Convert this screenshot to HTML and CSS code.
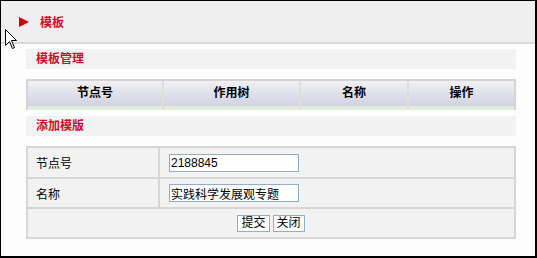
FILE: index.html
```html
<!DOCTYPE html>
<html lang="zh-CN">
<head>
    <meta charset="UTF-8">
    <title>模板</title>
    <link rel="stylesheet" href="styles.css">
</head>
<body>
    <div class="frame">
        <div class="title-bar">
            <span class="arrow"></span>
            <span class="title">模板</span>
        </div>

        <div class="content">
            <div class="section">模板管理</div>
            <div class="list">
                <div class="list-head">
                    <div class="cell">节点号</div>
                    <div class="cell">作用树</div>
                    <div class="cell">名称</div>
                    <div class="cell">操作</div>
                </div>
                <div class="list-foot">
                    <div class="cell"></div>
                    <div class="cell"></div>
                    <div class="cell"></div>
                    <div class="cell"></div>
                </div>
            </div>

            <div class="section">添加模版</div>
            <div class="form">
                <div class="label">节点号</div>
                <div class="field"><input type="text" class="text-input" value="2188845"></div>
                <div class="label">名称</div>
                <div class="field"><input type="text" class="text-input" value="实践科学发展观专题"></div>
                <div class="actions">
                    <button class="btn">提交</button>
                    <button class="btn">关闭</button>
                </div>
            </div>
        </div>

        <svg class="cursor" width="13" height="22" viewBox="0 0 13 22">
            <path d="M0.5 0.5 L0.5 16.5 L4.5 12.5 L7.5 19.5 L9.5 18.5 L6.5 11.5 L11.5 11.5 Z" fill="#fff" stroke="#000" stroke-width="1"/>
        </svg>
    </div>
</body>
</html>
```

FILE: styles.css
```css
body {
    margin: 0;
    background-color: #fff;
    font-family: "Liberation Sans", "Noto Sans CJK SC", sans-serif;
    font-size: 12px;
}
.frame {
    position: relative;
    box-sizing: border-box;
    width: 537px;
    height: 258px;
    border-style: solid;
    border-color: #000;
    border-width: 1px 2px 2px 1px;
    background-color: #fdfdfd;
}
.title-bar {
    display: flex;
    align-items: center;
    height: 41px;
    background-color: #efefef;
    border-bottom: 2px solid #d8d8d8;
}
.arrow {
    width: 0;
    height: 0;
    margin-left: 18px;
    margin-right: 11px;
    border-left: 10px solid #d40000;
    border-top: 5px solid transparent;
    border-bottom: 5px solid transparent;
}
.title {
    color: #c8102e;
    font-weight: bold;
}
.content {
    padding: 5px 19px 0 25px;
}
.section {
    height: 20px;
    line-height: 20px;
    padding-left: 10px;
    background-color: #f2f2f2;
    color: #c8102e;
    font-weight: bold;
}
.list {
    margin: 10px 0 6px;
    border: 2px solid #d4d4d4;
    border-bottom: 0;
}
.list-head,
.list-foot {
    display: grid;
    grid-template-columns: 134px 137px 108px 1fr;
}
.list-head .cell {
    height: 25px;
    line-height: 25px;
    text-align: center;
    font-weight: bold;
    color: #000;
    background: linear-gradient(#f0f0f4, #d2d2e2);
}
.list-foot .cell {
    height: 4px;
    background-color: #e0ecdc;
}
.cell + .cell {
    border-left: 2px solid #dde0d8;
}
.form {
    display: grid;
    grid-template-columns: 130px 1fr;
    grid-template-rows: 29px 28px 28px;
    gap: 2px;
    margin-top: 10px;
    border: 2px solid #d6d6d6;
    background-color: #d6d6d6;
}
.label,
.field,
.actions {
    display: flex;
    align-items: center;
    background-color: #f2f2f2;
}
.label {
    padding-left: 8px;
    color: #000;
}
.field {
    padding-left: 9px;
}
.text-input {
    box-sizing: border-box;
    width: 130px;
    height: 18px;
    padding: 0 1px;
    border: 1px solid #8fb0c8;
    background-color: #fff;
    font-family: "Liberation Sans", "Noto Sans CJK SC", sans-serif;
    font-size: 12px;
    color: #000;
}
.actions {
    grid-column: 1 / 3;
    justify-content: center;
    gap: 3px;
}
.btn {
    box-sizing: border-box;
    height: 17px;
    padding: 0 3px;
    border: 1px solid #8fb0c8;
    background-color: #fff;
    font-family: "Liberation Sans", "Noto Sans CJK SC", sans-serif;
    font-size: 12px;
    line-height: 15px;
    color: #000;
}
.cursor {
    position: absolute;
    left: 4px;
    top: 28px;
}
```
